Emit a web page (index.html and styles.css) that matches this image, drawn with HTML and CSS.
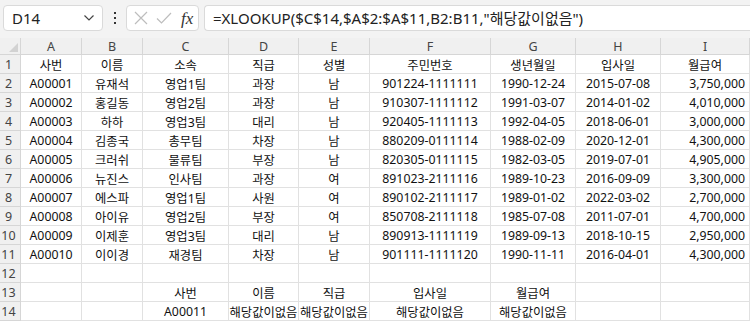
FILE: index.html
```html
<!DOCTYPE html>
<html lang="ko">
<head>
<meta charset="utf-8">
<link rel="stylesheet" href="styles.css">
</head>
<body>
<div class="app">
  <div class="toolbar">
    <div class="namebox">
      <span class="name">D14</span>
      <svg class="chev" width="12" height="8" viewBox="0 0 12 8"><path d="M1.5 1.5 L6 6 L10.5 1.5" fill="none" stroke="#444" stroke-width="1.2"/></svg>
    </div>
    <div class="dots"><i></i><i></i><i></i></div>
    <div class="fxbox">
      <svg width="14" height="14" viewBox="0 0 14 14"><path d="M1 1 L13 13 M13 1 L1 13" stroke="#bdbdbd" stroke-width="1.2" fill="none"/></svg>
      <svg width="16" height="14" viewBox="0 0 16 14"><path d="M1 7.5 L5.5 12 L15 2" stroke="#bdbdbd" stroke-width="1.2" fill="none"/></svg>
      <span class="fx">fx</span>
    </div>
    <div class="formula">=XLOOKUP($C$14,$A$2:$A$11,B2:B11,"해당값이없음")</div>
  </div>
  <div class="sheet">
    <div class="corner"><span class="tri"></span></div>
    <div class="ch">A</div><div class="ch">B</div><div class="ch">C</div><div class="ch">D</div><div class="ch">E</div><div class="ch">F</div><div class="ch">G</div><div class="ch">H</div><div class="ch">I</div>

    <div class="rh">1</div><div class="c">사번</div><div class="c">이름</div><div class="c">소속</div><div class="c">직급</div><div class="c">성별</div><div class="c">주민번호</div><div class="c">생년월일</div><div class="c">입사일</div><div class="c">월급여</div>
    <div class="rh">2</div><div class="c">A00001</div><div class="c">유재석</div><div class="c">영업1팀</div><div class="c">과장</div><div class="c">남</div><div class="c">901224-1111111</div><div class="c">1990-12-24</div><div class="c">2015-07-08</div><div class="c r">3,750,000</div>
    <div class="rh">3</div><div class="c">A00002</div><div class="c">홍길동</div><div class="c">영업2팀</div><div class="c">과장</div><div class="c">남</div><div class="c">910307-1111112</div><div class="c">1991-03-07</div><div class="c">2014-01-02</div><div class="c r">4,010,000</div>
    <div class="rh">4</div><div class="c">A00003</div><div class="c">하하</div><div class="c">영업3팀</div><div class="c">대리</div><div class="c">남</div><div class="c">920405-1111113</div><div class="c">1992-04-05</div><div class="c">2018-06-01</div><div class="c r">3,000,000</div>
    <div class="rh">5</div><div class="c">A00004</div><div class="c">김종국</div><div class="c">총무팀</div><div class="c">차장</div><div class="c">남</div><div class="c">880209-0111114</div><div class="c">1988-02-09</div><div class="c">2020-12-01</div><div class="c r">4,300,000</div>
    <div class="rh">6</div><div class="c">A00005</div><div class="c">크러쉬</div><div class="c">물류팀</div><div class="c">부장</div><div class="c">남</div><div class="c">820305-0111115</div><div class="c">1982-03-05</div><div class="c">2019-07-01</div><div class="c r">4,905,000</div>
    <div class="rh">7</div><div class="c">A00006</div><div class="c">뉴진스</div><div class="c">인사팀</div><div class="c">과장</div><div class="c">여</div><div class="c">891023-2111116</div><div class="c">1989-10-23</div><div class="c">2016-09-09</div><div class="c r">3,300,000</div>
    <div class="rh">8</div><div class="c">A00007</div><div class="c">에스파</div><div class="c">영업1팀</div><div class="c">사원</div><div class="c">여</div><div class="c">890102-2111117</div><div class="c">1989-01-02</div><div class="c">2022-03-02</div><div class="c r">2,700,000</div>
    <div class="rh">9</div><div class="c">A00008</div><div class="c">아이유</div><div class="c">영업2팀</div><div class="c">부장</div><div class="c">여</div><div class="c">850708-2111118</div><div class="c">1985-07-08</div><div class="c">2011-07-01</div><div class="c r">4,700,000</div>
    <div class="rh">10</div><div class="c">A00009</div><div class="c">이제훈</div><div class="c">영업3팀</div><div class="c">대리</div><div class="c">남</div><div class="c">890913-1111119</div><div class="c">1989-09-13</div><div class="c">2018-10-15</div><div class="c r">2,950,000</div>
    <div class="rh">11</div><div class="c">A00010</div><div class="c">이이경</div><div class="c">재경팀</div><div class="c">차장</div><div class="c">남</div><div class="c">901111-1111120</div><div class="c">1990-11-11</div><div class="c">2016-04-01</div><div class="c r">4,300,000</div>
    <div class="rh">12</div><div class="c"></div><div class="c"></div><div class="c"></div><div class="c"></div><div class="c"></div><div class="c"></div><div class="c"></div><div class="c"></div><div class="c"></div>
    <div class="rh">13</div><div class="c"></div><div class="c"></div><div class="c">사번</div><div class="c">이름</div><div class="c">직급</div><div class="c">입사일</div><div class="c">월급여</div><div class="c"></div><div class="c"></div>
    <div class="rh">14</div><div class="c"></div><div class="c"></div><div class="c">A00011</div><div class="c">해당값이없음</div><div class="c">해당값이없음</div><div class="c">해당값이없음</div><div class="c">해당값이없음</div><div class="c"></div><div class="c"></div>
  </div>
</div>
</body>
</html>
```

FILE: styles.css
```css
html, body {
  margin: 0;
  padding: 0;
  background: #ffffff;
}
.app {
  width: 750px;
  height: 322px;
  overflow: hidden;
  font-family: "Noto Sans", "Noto Sans CJK KR", sans-serif;
  color: #222;
}
.toolbar {
  height: 38px;
  background: #f3f3f3;
  display: flex;
  align-items: flex-start;
  padding: 5px 0 0 3px;
  box-sizing: border-box;
}
.namebox {
  width: 100px;
  height: 26px;
  box-sizing: border-box;
  background: #fff;
  border: 1px solid #dadada;
  border-radius: 4px;
  display: flex;
  align-items: center;
  justify-content: space-between;
  padding: 0 7px 0 8px;
}
.name {
  font-size: 15px;
  color: #222;
}
.dots {
  width: 23px;
  height: 26px;
  display: flex;
  flex-direction: column;
  align-items: center;
  justify-content: center;
  gap: 3px;
}
.dots i {
  display: block;
  width: 2px;
  height: 2px;
  background: #333;
}
.fxbox {
  width: 73px;
  height: 26px;
  box-sizing: border-box;
  background: #fff;
  border: 1px solid #dadada;
  border-radius: 4px;
  display: flex;
  align-items: center;
  padding: 0 0 0 7px;
  gap: 8px;
}
.fx {
  font-family: "Liberation Serif", serif;
  font-style: italic;
  font-size: 17px;
  color: #333;
  margin-left: 1px;
  line-height: 1;
}
.formula {
  flex: 1;
  margin-left: 5px;
  height: 26px;
  box-sizing: border-box;
  background: #fff;
  border: 1px solid #dadada;
  border-right: none;
  border-radius: 4px 0 0 4px;
  font-size: 15px;
  line-height: 24px;
  padding-left: 8px;
  color: #222;
  white-space: nowrap;
}
.sheet {
  display: grid;
  grid-template-columns: 21px 61px 61px 86px 70px 71px 121px 85px 85px 89px;
  grid-template-rows: 17px repeat(14, 19px);
  font-size: 12.3px;
}
.corner, .ch, .rh {
  background: #f0f0f0;
  color: #444;
  box-sizing: border-box;
  border-right: 1px solid #d6d6d6;
  border-bottom: 1px solid #d6d6d6;
}
.corner {
  position: relative;
}
.tri {
  position: absolute;
  right: 2px;
  bottom: 2px;
  width: 0;
  height: 0;
  border-left: 9px solid transparent;
  border-bottom: 9px solid #d2d2d2;
}
.ch {
  display: flex;
  align-items: center;
  justify-content: center;
  font-size: 12.5px;
}
.rh {
  display: flex;
  align-items: center;
  justify-content: center;
  padding-right: 3px;
  font-size: 12.5px;
}
.c {
  box-sizing: border-box;
  border-right: 1px solid #e1e1e1;
  border-bottom: 1px solid #e1e1e1;
  display: flex;
  align-items: center;
  justify-content: center;
  white-space: nowrap;
  overflow: visible;
  padding-top: 1px;
  color: #111;
}
.c.r {
  justify-content: flex-end;
  padding-right: 4px;
}
```
